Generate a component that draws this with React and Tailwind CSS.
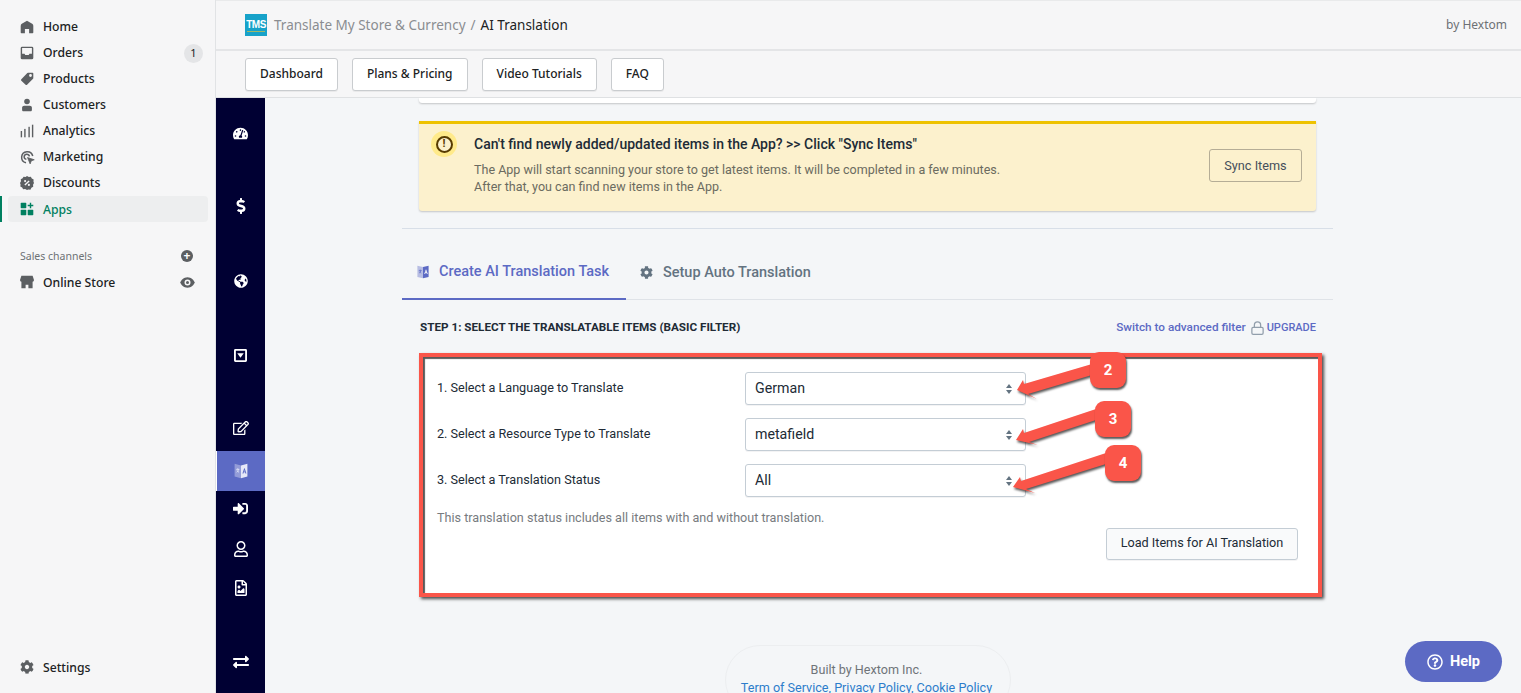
import { FaTachometerAlt, FaDollarSign, FaGlobeAmericas, FaRegEdit, FaSignInAlt, FaRegUser, FaRegFileImage, FaExchangeAlt, FaCog, FaRegQuestionCircle } from "react-icons/fa";
import { FiLock } from "react-icons/fi";

const HomeIcon = () => (
  <svg viewBox="0 0 20 20" className="w-[14px] h-[14px] fill-[#5c5f62]">
    <path d="M10 1 2.6 5.5C1.6 6.100 1 7.200 1 8.400V18a1 1 0 0 0 1 1h5v-6h6v6h5a1 1 0 0 0 1-1V8.400c0-1.200-.6-2.300-1.600-2.900z" />
  </svg>
);
const OrdersIcon = () => (
  <svg viewBox="0 0 20 20" className="w-[14px] h-[14px] fill-[#5c5f62]">
    <path fillRule="evenodd" d="M3 1h14a2 2 0 0 1 2 2v14a2 2 0 0 1-2 2H3a2 2 0 0 1-2-2V3a2 2 0 0 1 2-2zm0 2v8h3.500l1 2h5l1-2H17V3z" />
  </svg>
);
const ProductsIcon = () => (
  <svg viewBox="0 0 20 20" className="w-[14px] h-[14px] fill-[#5c5f62]">
    <path fillRule="evenodd" d="M11.500 1H18a1 1 0 0 1 1 1v6.500a1.500 1.500 0 0 1-.4 1l-8.500 8.600a1.500 1.500 0 0 1-2.100 0L1.900 12.500a1.500 1.500 0 0 1 0-2.100L10.500 1.400a1.500 1.500 0 0 1 1-.4zM15 7a2 2 0 1 0 0-4 2 2 0 0 0 0 4z" />
  </svg>
);
const CustomersIcon = () => (
  <svg viewBox="0 0 20 20" className="w-[14px] h-[14px] fill-[#5c5f62]">
    <circle cx="10" cy="5" r="4" />
    <path d="M3 14c0-1.700 1.300-3 3-3h8c1.700 0 3 1.300 3 3v3c0 1.100-.9 2-2 2H5c-1.100 0-2-.9-2-2z" />
  </svg>
);
const AnalyticsIcon = () => (
  <svg viewBox="0 0 20 20" className="w-[14px] h-[14px] fill-[#5c5f62]">
    <rect x="1" y="10" width="2" height="9" />
    <rect x="6" y="7" width="2" height="12" />
    <rect x="12" y="4" width="2" height="15" />
    <rect x="17" y="1" width="2" height="18" />
  </svg>
);
const MarketingIcon = () => (
  <svg viewBox="0 0 20 20" className="w-[15px] h-[15px] fill-none stroke-[#5c5f62]" strokeWidth="2">
    <path d="M8 17A7.500 7.500 0 1 1 17 8" />
    <path d="M8.500 12.500A3.500 3.500 0 1 1 12.500 8.500" />
    <path className="fill-[#5c5f62]" strokeWidth="1" d="M10 10l9 3-4 1.500-1.500 4z" />
  </svg>
);
const DiscountsIcon = () => (
  <svg viewBox="0 0 20 20" className="w-[14px] h-[14px]">
    <path className="fill-[#5c5f62]" d="M10 0l2.600 1.400 2.900-.3 1.400 2.600 2.600 1.400-.3 2.900L20 10l-1.400 2.600.3 2.900-2.600 1.400-1.400 2.600-2.900-.3L10 20l-2.600-1.400-2.900.3-1.400-2.600-2.600-1.400.3-2.900L0 10l1.400-2.600-.3-2.900 2.600-1.400L5.100 1.100l2.900.3z" />
    <path className="stroke-[#f6f6f7]" strokeWidth="2" d="M13 7l-6 6" />
    <circle className="fill-[#f6f6f7]" cx="7.300" cy="7.300" r="1.500" />
    <circle className="fill-[#f6f6f7]" cx="12.700" cy="12.700" r="1.500" />
  </svg>
);
const AppsIcon = () => (
  <svg viewBox="0 0 20 20" className="w-[14px] h-[14px] fill-[#008060]">
    <rect x="1" y="1" width="8" height="8" rx="1" />
    <rect x="1" y="11" width="8" height="8" rx="1" />
    <rect x="11" y="11" width="8" height="8" rx="1" />
    <path d="M14 1h2v3h3v2h-3v3h-2V6h-3V4h3z" />
  </svg>
);
const StoreIcon = () => (
  <svg viewBox="0 0 20 20" className="w-[14px] h-[14px] fill-[#5c5f62]">
    <path d="M2 1h16l2 6a3 3 0 0 1-2 2.800V19h-6v-5H8v5H2V9.800A3 3 0 0 1 0 7z" />
  </svg>
);
const LangIcon = ({ className }) => (
  <svg viewBox="0 0 20 20" className={className}>
    <path className="fill-current opacity-40" d="M2 1l8 2v16l-8-2z" />
    <path className="fill-current" fillRule="evenodd" d="M10 3l8-2v16l-8 2zm4 3.500L11.800 13h1.300l.4-1.400h1.600l.4 1.400h1.300L14.600 6.500zm.2 2.300l.5 1.700h-1z" />
    <path className="stroke-current" strokeWidth="1" fill="none" d="M4 8h4M6 6.500V8M7 8c-.3 1.500-1.300 2.800-2.500 3.500M5 9.500c.5 1 1.300 1.600 2.500 2" />
  </svg>
);
const DropSquareIcon = () => (
  <svg viewBox="0 0 14 14" className="w-[13px] h-[13px] fill-white">
    <path fillRule="evenodd" d="M1.500 0h11A1.500 1.500 0 0 1 14 1.500v11a1.500 1.500 0 0 1-1.500 1.500h-11A1.500 1.500 0 0 1 0 12.500v-11A1.500 1.500 0 0 1 1.500 0zM2 2v10h10V2zm1.500 2.500h7L7 9.500z" />
  </svg>
);

const sideItems = [
  { label: "Home", icon: <HomeIcon /> },
  { label: "Orders", icon: <OrdersIcon />, badge: "1" },
  { label: "Products", icon: <ProductsIcon /> },
  { label: "Customers", icon: <CustomersIcon /> },
  { label: "Analytics", icon: <AnalyticsIcon /> },
  { label: "Marketing", icon: <MarketingIcon /> },
  { label: "Discounts", icon: <DiscountsIcon /> },
];

const SideRow = ({ icon, label, badge }) => (
  <div className="flex items-center h-[26px] pl-[20px] pr-[12px]">
    <span className="w-[23px] flex items-center">{icon}</span>
    <span className="flex-1 text-[12.200px] font-medium text-[#202223]">{label}</span>
    {badge && (
      <span className="w-[19px] h-[19px] rounded-full bg-[#e4e5e7] text-[11px] flex items-center justify-center text-[#202223]">
        {badge}
      </span>
    )}
  </div>
);

const Sidebar = () => (
  <div className="w-[216px] shrink-0 flex flex-col bg-[#f6f6f7] border-r border-[#e1e3e5] font-['Noto_Sans',sans-serif] pt-[14px] pb-[13px]">
    {sideItems.map((item) => (
      <SideRow key={item.label} {...item} />
    ))}
    <div className="relative flex items-center h-[26px] ml-[8px] mr-[7px] pl-[12px] rounded bg-[#edeeef]">
      <span className="absolute -left-[8px] top-0 bottom-0 w-[2px] bg-[#008060]" />
      <span className="w-[23px] flex items-center"><AppsIcon /></span>
      <span className="pt-[2px] text-[12.200px] font-medium text-[#008060]">Apps</span>
    </div>
    <div className="flex items-center h-[26px] mt-[21px] pl-[20px] pr-[22px]">
      <span className="flex-1 pt-[2px] text-[10.500px] text-[#6d7175]">Sales channels</span>
      <span className="w-[12px] h-[12px] rounded-full bg-[#5c5f62] text-white text-[12px] leading-[12px] font-bold flex items-center justify-center">+</span>
    </div>
    <div className="flex items-center h-[26px] pl-[20px] pr-[20px]">
      <span className="w-[23px] flex items-center"><StoreIcon /></span>
      <span className="flex-1 pt-[2px] text-[12.200px] font-medium text-[#202223]">Online Store</span>
      <svg viewBox="0 0 20 20" className="w-[15px] h-[15px] fill-[#5c5f62]">
        <path fillRule="evenodd" d="M10 3C5 3 1.500 7 .2 10c1.300 3 4.800 7 9.800 7s8.500-4 9.800-7C18.500 7 15 3 10 3zm0 11a4 4 0 1 1 0-8 4 4 0 0 1 0 8zm0-2a2 2 0 1 0 0-4 2 2 0 0 0 0 4z" />
      </svg>
    </div>
    <div className="mt-auto flex items-center h-[26px] pl-[20px]">
      <span className="w-[23px] flex items-center"><FaCog className="w-[14px] h-[14px] text-[#5c5f62]" /></span>
      <span className="pt-[2px] text-[12.200px] font-medium text-[#202223]">Settings</span>
    </div>
  </div>
);

const TopBar = () => (
  <div className="font-['Noto_Sans',sans-serif] shrink-0">
    <div className="h-[51px] bg-[#f6f6f7] border-t border-[#e9eaeb] border-b-2 border-b-[#e4e5e7] flex items-center pl-[29px] pr-[14px]">
      <div className="w-[22px] h-[22px] bg-[#17a2c9] flex flex-col items-center justify-center">
        <span className="text-white text-[10px] leading-[11px] tracking-[-0.5px] font-bold font-['Liberation_Sans',sans-serif]">TMS</span>
        <span className="w-[18px] h-px bg-[#9fb86a] mt-px" />
      </div>
      <span className="ml-[7px] text-[13.500px] text-[#8a8d91]">Translate My Store &amp; Currency</span>
      <span className="mx-[5px] text-[13.500px] text-[#8a8d91]">/</span>
      <span className="text-[13.500px] text-[#202223]">AI Translation</span>
      <span className="ml-auto text-[12px] text-[#6d7175]">by Hextom</span>
    </div>
    <div className="h-[47px] bg-[#f6f6f7] border-b border-[#dfe1e3] flex items-center gap-[14px] pl-[29px]">
      {["Dashboard", "Plans & Pricing", "Video Tutorials", "FAQ"].map((t) => (
        <button key={t} className="h-[33px] px-[14px] bg-white border border-[#c9cccf] rounded-[3px] shadow-[0_1px_0_rgba(0,0,0,0.05)] text-[12px] font-medium text-[#202223]">
          {t}
        </button>
      ))}
    </div>
  </div>
);

const Rail = () => (
  <div className="w-[49px] shrink-0 bg-[#000033] flex flex-col text-white pt-[15px] pb-[11px]">
    <div className="h-10 flex items-center justify-center"><FaTachometerAlt className="w-[15px] h-[15px]" /></div>
    <div className="h-10 mt-[33px] flex items-center justify-center"><FaDollarSign className="w-[16px] h-[16px]" /></div>
    <div className="h-10 mt-[35px] flex items-center justify-center"><FaGlobeAmericas className="w-[14px] h-[14px]" /></div>
    <div className="h-10 mt-[34px] flex items-center justify-center"><DropSquareIcon /></div>
    <div className="h-10 mt-[33px] flex items-center justify-center"><FaRegEdit className="w-[16px] h-[16px]" /></div>
    <div className="h-10 mt-[3px] bg-[#5c6ac4] border-l border-white flex items-center justify-center text-[#e6e8f8]"><LangIcon className="w-[16px] h-[16px]" /></div>
    <div className="h-10 -mt-[3px] flex items-center justify-center"><FaSignInAlt className="w-[15px] h-[15px]" /></div>
    <div className="h-10 mt-px flex items-center justify-center"><FaRegUser className="w-[14px] h-[16px]" /></div>
    <div className="h-10 -mt-px flex items-center justify-center"><FaRegFileImage className="w-[14px] h-[16px]" /></div>
    <div className="h-10 mt-auto flex items-center justify-center"><FaExchangeAlt className="w-[16px] h-[16px]" /></div>
  </div>
);

const Select = ({ value }) => (
  <div className="w-[281px] h-[33px] bg-white border border-[#c4cdd5] rounded-[3px] shadow-[0_1px_0_rgba(22,29,37,0.05)] flex items-center pl-[9px] pr-[13px]">
    <span className="flex-1 text-[14.200px] text-[#212b36]">{value}</span>
    <svg viewBox="0 0 6 10" className="w-[6px] h-[10px] fill-[#637381]">
      <path d="M3 0l3 4H0zM3 10L0 6h6z" />
    </svg>
  </div>
);

const fields = [
  { label: "1. Select a Language to Translate", value: "German" },
  { label: "2. Select a Resource Type to Translate", value: "metafield" },
  { label: "3. Select a Translation Status", value: "All" },
];

const Arrow = ({ d }) => <path d={d} />;

const Badge = ({ n, className }) => (
  <div className={`absolute w-[36px] h-[36px] rounded-[9px] bg-[#fa5549] shadow-[1px_2px_2px_rgba(0,0,0,0.65)] flex items-center justify-center text-white text-[15px] font-bold ${className}`}>
    {n}
  </div>
);

const FilterBox = () => (
  <div className="relative w-[903px] h-[244px] ml-[17px] mt-[17px] bg-white border-[4px] border-[#fa5549] shadow-[2px_2px_3px_rgba(0,0,0,0.7)]">
    <div className="h-full shadow-[inset_2px_2px_1px_rgba(0,0,0,0.65)] pl-[14px] pr-[20px] pt-[15px]">
      <div className="flex flex-col gap-[13px]">
        {fields.map((f) => (
          <div key={f.label} className="flex items-center">
            <span className="w-[308px] text-[12.650px] text-[#212b36]">{f.label}</span>
            <Select value={f.value} />
          </div>
        ))}
      </div>
      <p className="mt-[12px] text-[12.600px] text-[#777b80]">This translation status includes all items with and without translation.</p>
      <div className="flex justify-end">
        <button className="w-[192px] h-[32px] bg-[#f9fafb] border border-[#c4cdd5] rounded-[3px] shadow-[0_1px_0_rgba(22,29,37,0.05)] text-[12.650px] text-[#212b36]">
          Load Items for AI Translation
        </button>
      </div>
    </div>
    <svg viewBox="423 357 895 236" className="absolute left-0 top-0 w-[895px] h-[236px] overflow-visible fill-[#fa5549] drop-shadow-[1px_2px_1px_rgba(0,0,0,0.65)]">
      <Arrow d="M1017 390l6-10 1 4 68-20v11l-64 19 9 5z" />
      <Arrow d="M1016 440l7-11 1 4 72-24v11l-67 22 9 3z" />
      <Arrow d="M1013 487l7-10 1 4 85-28v11l-80 25 9 4z" />
    </svg>
    <Badge n="2" className="left-[667px] -top-[5px]" />
    <Badge n="3" className="left-[672px] top-[44px]" />
    <Badge n="4" className="left-[682px] top-[88px]" />
  </div>
);

const Main = () => (
  <div className="flex-1 min-w-0 bg-[#f4f6f8] font-['Roboto',sans-serif] overflow-hidden">
    <div className="w-[931px] ml-[137px]">
      <div className="h-[5px] mx-[17px] bg-white rounded-b-[3px] shadow-[0_1px_2px_rgba(0,0,0,0.2)]" />
      <div className="mx-[17px] mt-[18px] h-[90px] bg-[#fcf1cd] border-t-[3px] border-[#eec200] rounded-b-[3px] shadow-[0_1px_2px_rgba(0,0,0,0.2)] flex pl-[12px] pr-[14px]">
        <div className="mt-[7px] w-[26px] h-[26px] rounded-full bg-[#ffea8a] flex items-center justify-center">
          <span className="w-[17px] h-[17px] rounded-full border-2 border-[#573b00] bg-[#fcf1cd] flex items-center justify-center text-[#573b00] text-[11px] font-bold">!</span>
        </div>
        <div className="ml-[17px] flex-1 pt-[11px]">
          <div className="text-[14px] font-medium leading-[18px] text-[#212b36]">Can't find newly added/updated items in the App? &gt;&gt; Click "Sync Items"</div>
          <div className="mt-[8px] text-[12.540px] leading-[17px] text-[#6b6b60]">
            The App will start scanning your store to get latest items. It will be completed in a few minutes.
            <br />
            After that, you can find new items in the App.
          </div>
        </div>
        <div className="self-center mt-[-4px]">
          <button className="w-[93px] h-[33px] border border-[#b5ad96] rounded-[3px] text-[12.700px] text-[#454f5b]">Sync Items</button>
        </div>
      </div>
      <div className="mt-[17px] border-t border-[#d8dfe8]" />
      <div className="mt-[20px] h-[51px] border-b border-[#dfe3e8] flex">
        <div className="w-[224px] h-[51px] border-b-2 border-[#5c6ac4] flex items-center pb-[3px] pl-[14px] text-[#5c6ac4]">
          <LangIcon className="w-[14px] h-[14px]" />
          <span className="ml-[9px] text-[14.500px] font-medium">Create AI Translation Task</span>
        </div>
        <div className="h-[47px] flex items-center pl-[14px] text-[#637381]">
          <FaCog className="w-[13px] h-[13px]" />
          <span className="ml-[10px] text-[14.500px] font-medium">Setup Auto Translation</span>
        </div>
      </div>
      <div className="mt-[20px] ml-[18px] mr-[17px] h-[16px] flex items-center">
        <span className="flex-1 text-[11.700px] font-bold text-[#212b36]">STEP 1: SELECT THE TRANSLATABLE ITEMS (BASIC FILTER)</span>
        <span className="text-[11.750px] font-medium text-[#5c6ac4]">Switch to advanced filter</span>
        <FiLock className="ml-[4px] w-[15px] h-[16px] text-[#919eab]" />
        <span className="ml-[2px] text-[11px] font-medium text-[#5c6ac4]">UPGRADE</span>
      </div>
      <FilterBox />
      <div className="mt-[48px] ml-[323px] w-[286px] h-[70px] rounded-[48px] border border-[#eceef0] pt-[15px] pr-[3px] text-center text-[12.600px] leading-[18px]">
        <div className="text-[#6f7479]">Built by Hextom Inc.</div>
        <div className="text-[#2c7dcb]">Term of Service, Privacy Policy, Cookie Policy</div>
      </div>
    </div>
  </div>
);

export default function App() {
  return (
    <div className="relative w-[1521px] h-[693px] flex overflow-hidden">
      <Sidebar />
      <div className="flex-1 min-w-0 flex flex-col">
        <TopBar />
        <div className="flex-1 min-h-0 flex">
          <Rail />
          <Main />
        </div>
      </div>
      <button className="absolute left-[1405px] top-[641px] w-[97px] h-[41px] rounded-full bg-[#5c6ac4] flex items-center justify-center text-white font-['Roboto',sans-serif] text-[14.500px] font-bold">
        <FaRegQuestionCircle className="w-[16px] h-[16px] mr-[7px]" />
        Help
      </button>
    </div>
  );
}
